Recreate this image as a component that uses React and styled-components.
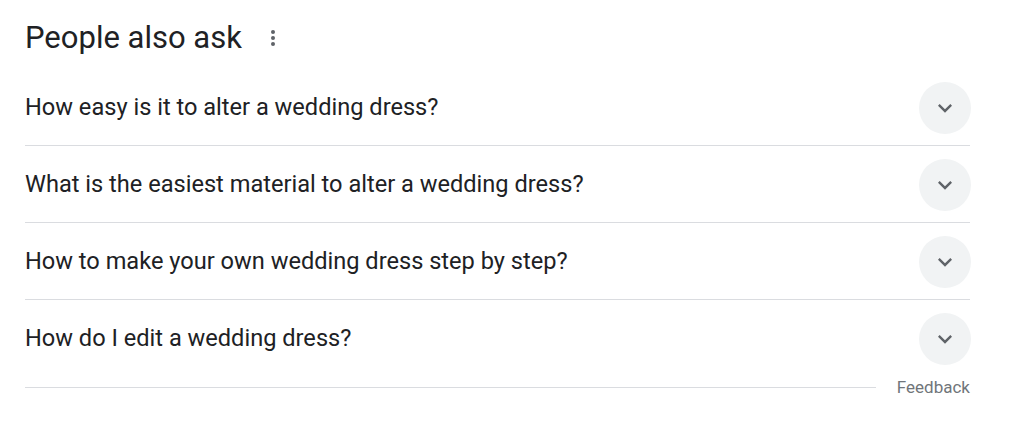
import React from "react";
import styled, { createGlobalStyle } from "styled-components";

const GlobalStyle = createGlobalStyle`
  body {
    margin: 0;
    background: #ffffff;
    font-family: Roboto, "Liberation Sans", Arial, sans-serif;
    color: #202124;
  }
`;

const Container = styled.div`
  width: 945px;
  padding: 18px 0 0 25px;
`;

const Header = styled.div`
  display: flex;
  align-items: center;
  height: 40px;
  margin-bottom: 11px;
`;

const Title = styled.h2`
  margin: 0;
  font-size: 31px;
  font-weight: 400;
  line-height: 40px;
  color: #202124;
`;

const MenuBtn = styled.div`
  display: flex;
  flex-direction: column;
  gap: 2px;
  margin-left: 25px;
  padding: 4px;
  span {
    width: 4px;
    height: 4px;
    border-radius: 50%;
    background: #5f6368;
  }
`;

const Row = styled.div`
  display: flex;
  align-items: center;
  justify-content: space-between;
  height: 76px;
  border-top: ${props => (props.first ? "none" : "1px solid #dadce0")};
`;

const Question = styled.span`
  font-size: 23.6px;
  line-height: 30px;
  color: #202124;
`;

const Chevron = styled.div`
  display: flex;
  align-items: center;
  justify-content: center;
  width: 52px;
  height: 52px;
  border-radius: 50%;
  background: #f1f3f4;
  margin-right: -1px;
  margin-top: 2px;
`;

const Footer = styled.div`
  display: flex;
  align-items: center;
  margin-top: 1px;
`;

const Line = styled.div`
  flex: 1;
  height: 1px;
  background: #dadce0;
`;

const Feedback = styled.span`
  margin-left: 21px;
  font-size: 17px;
  color: #70757a;
`;

const questions = [
  "How easy is it to alter a wedding dress?",
  "What is the easiest material to alter a wedding dress?",
  "How to make your own wedding dress step by step?",
  "How do I edit a wedding dress?"
];

const App = () => (
  <>
    <GlobalStyle />
    <Container>
      <Header>
        <Title>People also ask</Title>
        <MenuBtn>
          <span />
          <span />
          <span />
        </MenuBtn>
      </Header>
      {questions.map((q, i) => (
        <Row key={q} first={i === 0}>
          <Question>{q}</Question>
          <Chevron>
            <svg width="28" height="28" viewBox="0 0 24 24" fill="#5f6368">
              <path d="M16.59 8.59L12 13.17 7.41 8.59 6 10l6 6 6-6z" />
            </svg>
          </Chevron>
        </Row>
      ))}
      <Footer>
        <Line />
        <Feedback>Feedback</Feedback>
      </Footer>
    </Container>
  </>
);

export default App;
